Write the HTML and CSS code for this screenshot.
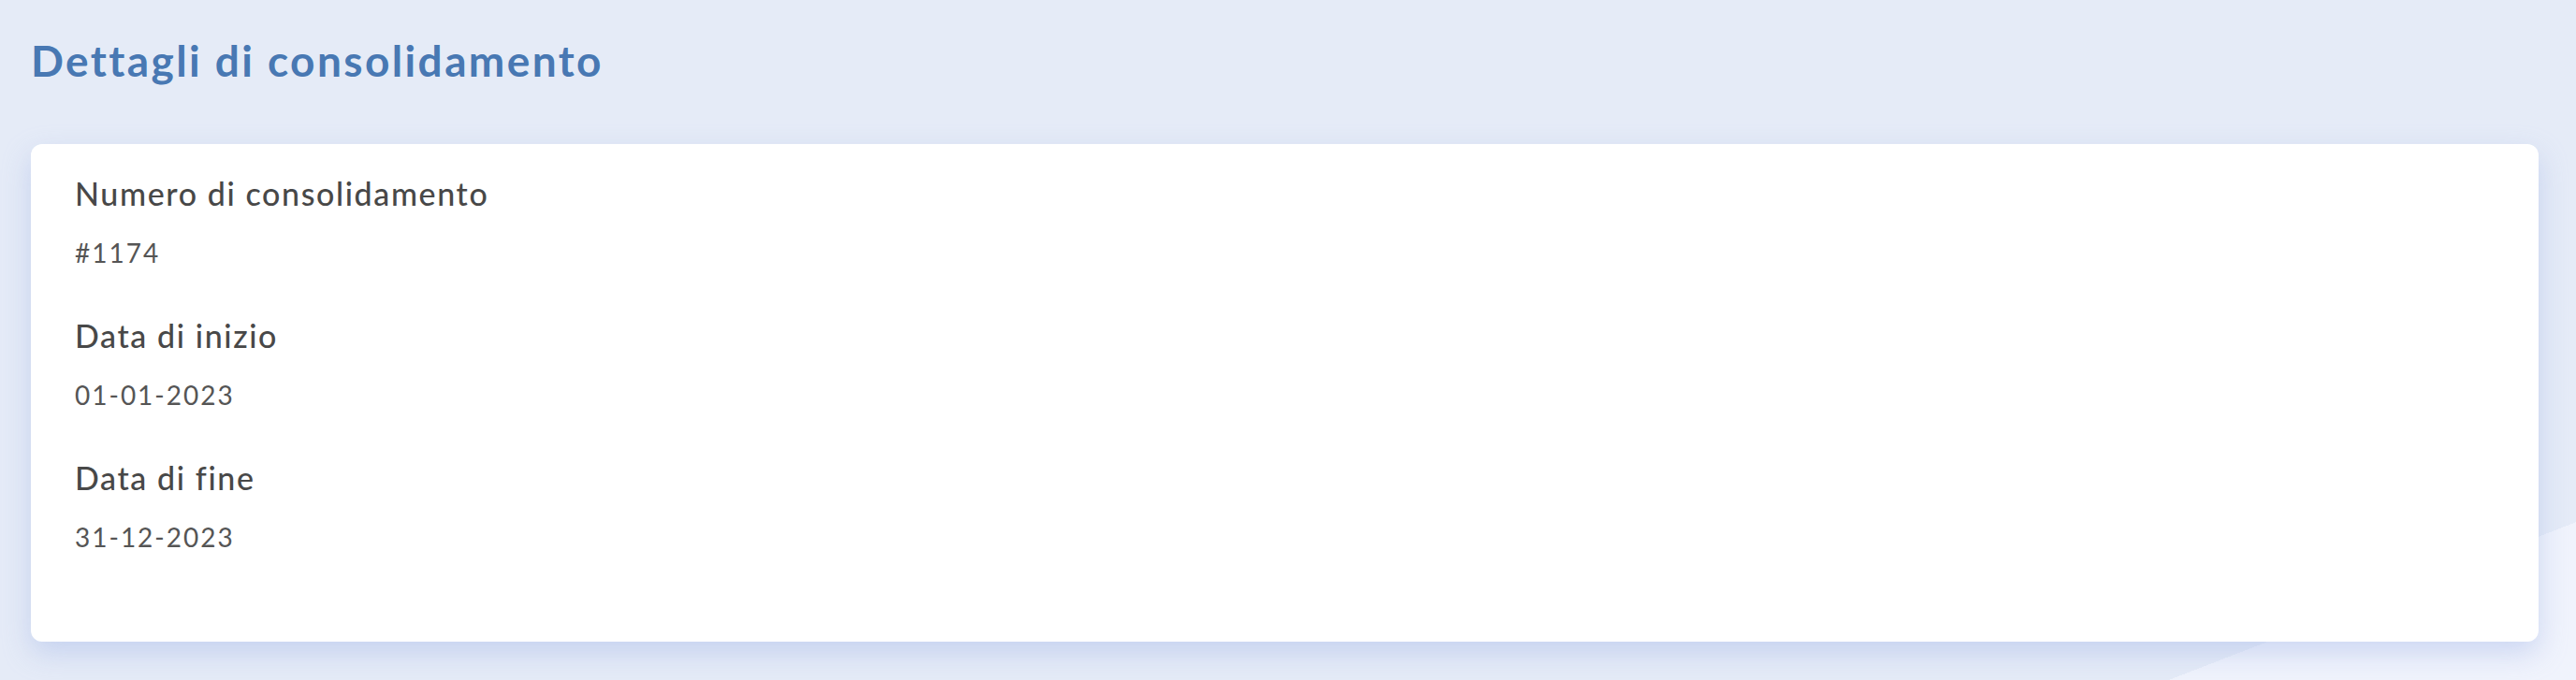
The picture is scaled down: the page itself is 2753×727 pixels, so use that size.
FILE: index.html
```html
<!DOCTYPE html>
<html lang="it">
<head>
<meta charset="utf-8">
<title>Dettagli di consolidamento</title>
<link rel="stylesheet" href="styles.css">
</head>
<body>
<main class="page">
  <h1 class="page-title">Dettagli di consolidamento</h1>
  <section class="card">
    <div class="field">
      <div class="field-label">Numero di consolidamento</div>
      <div class="field-value">#1174</div>
    </div>
    <div class="field">
      <div class="field-label">Data di inizio</div>
      <div class="field-value">01-01-2023</div>
    </div>
    <div class="field">
      <div class="field-label">Data di fine</div>
      <div class="field-value">31-12-2023</div>
    </div>
  </section>
</main>
</body>
</html>
```

FILE: styles.css
```css
html, body {
  margin: 0;
  height: 100%;
}

body {
  font-family: Lato, "Noto Sans", sans-serif;
  font-variant-ligatures: none;
  color: #4d4d4d;
  /* pale backdrop with a lighter diagonal wedge in the lower right */
  background: linear-gradient(158.8deg, #e5ebf7 1516px, #f0f3fc 1516px);
  min-height: 100vh;
  overflow: hidden;
}

.page {
  padding: 37px 40px 0 33px;
}

.page-title {
  margin: 0 0 61px 0;
  font-size: 46px;
  line-height: 56px;
  font-weight: 700;
  letter-spacing: 2.4px;
  color: #4878b3;
}

.card {
  background: #ffffff;
  border-radius: 12px;
  box-shadow: 0 12px 30px rgba(160, 180, 230, 0.45);
  padding: 33px 47px 95px;
  display: flex;
  flex-direction: column;
  gap: 52px;
}

.field {
  display: flex;
  flex-direction: column;
  gap: 26px;
}

.field-label {
  font-size: 34px;
  line-height: 40px;
  font-weight: 500;
  letter-spacing: 1.6px;
  color: #484848;
}

.field-value {
  font-size: 28px;
  line-height: 34px;
  font-weight: 400;
  letter-spacing: 2px;
  color: #555555;
}
```
